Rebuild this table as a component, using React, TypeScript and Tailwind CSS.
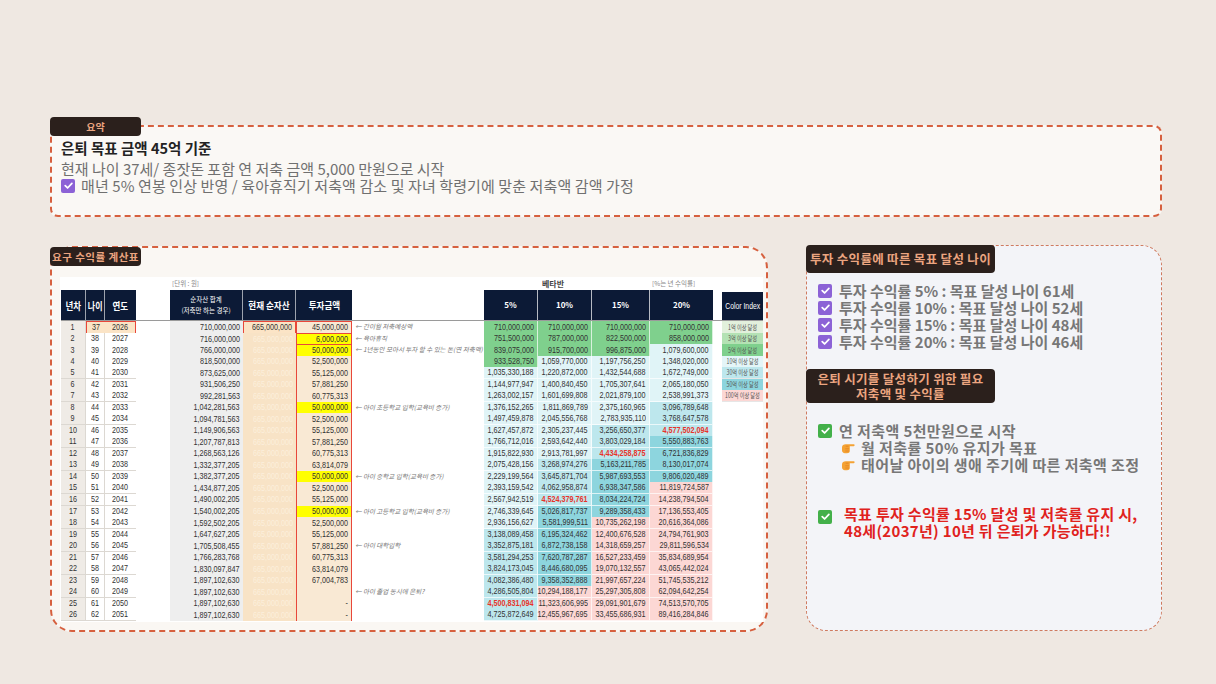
import React from "react";

const kr = "font-['Noto_Sans_CJK_KR','Noto_Sans',sans-serif]";
const sans = "font-['Liberation_Sans','Arial',sans-serif]";
const cols =
  "grid grid-cols-[25px_19px_31px_34px_73px_53px_56px_132px_54px_54px_58px_63px_9px_41px]";

// [순자산 합계, 투자금액, 5%, 10%, 15%, 20%]
const data: string[][] = [
  ["710,000,000", "45,000,000", "710,000,000", "710,000,000", "710,000,000", "710,000,000"],
  ["716,000,000", "6,000,000", "751,500,000", "787,000,000", "822,500,000", "858,000,000"],
  ["766,000,000", "50,000,000", "839,075,000", "915,700,000", "996,875,000", "1,079,600,000"],
  ["818,500,000", "52,500,000", "933,528,750", "1,059,770,000", "1,197,756,250", "1,348,020,000"],
  ["873,625,000", "55,125,000", "1,035,330,188", "1,220,872,000", "1,432,544,688", "1,672,749,000"],
  ["931,506,250", "57,881,250", "1,144,977,947", "1,400,840,450", "1,705,307,641", "2,065,180,050"],
  ["992,281,563", "60,775,313", "1,263,002,157", "1,601,699,808", "2,021,879,100", "2,538,991,373"],
  ["1,042,281,563", "50,000,000", "1,376,152,265", "1,811,869,789", "2,375,160,965", "3,096,789,648"],
  ["1,094,781,563", "52,500,000", "1,497,459,878", "2,045,556,768", "2,783,935,110", "3,768,647,578"],
  ["1,149,906,563", "55,125,000", "1,627,457,872", "2,305,237,445", "3,256,650,377", "4,577,502,094"],
  ["1,207,787,813", "57,881,250", "1,766,712,016", "2,593,642,440", "3,803,029,184", "5,550,883,763"],
  ["1,268,563,126", "60,775,313", "1,915,822,930", "2,913,781,997", "4,434,258,875", "6,721,836,829"],
  ["1,332,377,205", "63,814,079", "2,075,428,156", "3,268,974,276", "5,163,211,785", "8,130,017,074"],
  ["1,382,377,205", "50,000,000", "2,229,199,564", "3,645,871,704", "5,987,693,553", "9,806,020,489"],
  ["1,434,877,205", "52,500,000", "2,393,159,542", "4,062,958,874", "6,938,347,586", "11,819,724,587"],
  ["1,490,002,205", "55,125,000", "2,567,942,519", "4,524,379,761", "8,034,224,724", "14,238,794,504"],
  ["1,540,002,205", "50,000,000", "2,746,339,645", "5,026,817,737", "9,289,358,433", "17,136,553,405"],
  ["1,592,502,205", "52,500,000", "2,936,156,627", "5,581,999,511", "10,735,262,198", "20,616,364,086"],
  ["1,647,627,205", "55,125,000", "3,138,089,458", "6,195,324,462", "12,400,676,528", "24,794,761,903"],
  ["1,705,508,455", "57,881,250", "3,352,875,181", "6,872,738,158", "14,318,659,257", "29,811,596,534"],
  ["1,766,283,768", "60,775,313", "3,581,294,253", "7,620,787,287", "16,527,233,459", "35,834,689,954"],
  ["1,830,097,847", "63,814,079", "3,824,173,045", "8,446,680,095", "19,070,132,557", "43,065,442,024"],
  ["1,897,102,630", "67,004,783", "4,082,386,480", "9,358,352,888", "21,997,657,224", "51,745,535,212"],
  ["1,897,102,630", "", "4,286,505,804", "10,294,188,177", "25,297,305,808", "62,094,642,254"],
  ["1,897,102,630", "-", "4,500,831,094", "11,323,606,995", "29,091,901,679", "74,513,570,705"],
  ["1,897,102,630", "-", "4,725,872,649", "12,455,967,695", "33,455,686,931", "89,416,284,846"],
];

const notes: Record<number, string> = {
  1: "← 간이월 저축예상액",
  2: "← 육아휴직",
  3: "← 1년동안 모아서 투자 할 수 있는 돈(연 저축액)",
  8: "← 아이 초등학교 입학(교육비 증가)",
  14: "← 아이 중학교 입학(교육비 증가)",
  17: "← 아이 고등학교 입학(교육비 증가)",
  20: "← 아이 대학입학",
  24: "← 아이 졸업 동시에 은퇴?",
};

const yellowRows = [2, 3, 8, 14, 17];
const redCells = ["10-3", "12-2", "16-1", "25-0"];

const colorIndex: [string, string][] = [
  ["1억 이상 달성", "bg-[#e2f0dc]"],
  ["3억 이상 달성", "bg-[#b4e2b4]"],
  ["5억 이상 달성", "bg-[#7fd08d]"],
  ["10억 이상 달성", "bg-[#e4f5f8]"],
  ["30억 이상 달성", "bg-[#bde7ed]"],
  ["50억 이상 달성", "bg-[#8dd5de]"],
  ["100억 이상 달성", "bg-[#fcd7d4]"],
];

function band(s: string) {
  const v = Number(s.replace(/,/g, ""));
  if (v >= 10000000000) return "bg-[#fcd7d4]";
  if (v >= 5000000000) return "bg-[#8dd5de]";
  if (v >= 3000000000) return "bg-[#bde7ed]";
  if (v >= 1000000000) return "bg-[#e0f4f7]";
  if (v >= 500000000) return "bg-[#7fd08d]";
  if (v >= 300000000) return "bg-[#b4e2b4]";
  return "bg-[#e2f0dc]";
}

// narrow, Arial-Narrow-like numbers
const R = ({ children }: { children: React.ReactNode }) => (
  <span className="inline-block origin-right scale-x-[0.8] whitespace-nowrap">{children}</span>
);
const C = ({ children, s = "scale-x-[0.8]" }: { children: React.ReactNode; s?: string }) => (
  <span className={`inline-block origin-center whitespace-nowrap ${s}`}>{children}</span>
);

const PurpleCheck = () => (
  <span className="inline-flex h-[14px] w-[14px] shrink-0 items-center justify-center rounded-[2px] bg-[#8c62d6]">
    <svg viewBox="0 0 12 12" className="h-[11px] w-[11px]">
      <path d="M2.4 6.2 L5 8.7 L9.7 3.6" stroke="white" strokeWidth="1.9" fill="none" strokeLinecap="round" strokeLinejoin="round" />
    </svg>
  </span>
);

const GreenCheck = () => (
  <span className="inline-flex h-[14px] w-[14px] shrink-0 items-center justify-center rounded-[2px] bg-[#43b04a]">
    <svg viewBox="0 0 12 12" className="h-[11px] w-[11px]">
      <path d="M2.4 6.2 L5 8.7 L9.7 3.6" stroke="white" strokeWidth="1.9" fill="none" strokeLinecap="round" strokeLinejoin="round" />
    </svg>
  </span>
);

const Hand = () => (
  <svg viewBox="0 0 16 14" className="h-[13px] w-[15px] shrink-0">
    <path d="M1 7 C1 4.8 2.8 3.6 5 3.6 L13.6 3.6 C15 3.6 15 5.6 13.6 5.6 L9.4 5.6 L9.4 10.8 C9.4 12.4 8 13.2 6.4 13.2 L4.2 13.2 C2.2 13.2 1 11.8 1 10 Z" fill="#f4a234" />
    <path d="M5 5.6 L8 5.6 M4.6 8.4 L8.6 8.4 M4.6 10.8 L8.4 10.8" stroke="#e07f1f" strokeWidth="0.8" />
  </svg>
);

const Label = ({ children, className = "" }: { children: React.ReactNode; className?: string }) => (
  <div className={`rounded-[4px] bg-[#2b201c] text-center font-bold text-[#eba580] ${kr} ${className}`}>{children}</div>
);

function TableRow({ i, row }: { i: number; row: string[] }) {
  const n = i + 1;
  const yellow = yellowRows.includes(n);
  const ci = colorIndex[i];
  const num = "flex items-center justify-end pr-[3px]";
  const mid = "flex items-center justify-center";
  return (
    <div className={`${cols} h-[11.54px] text-[9px] leading-[11px] text-[#333] ${sans}`}>
      <div className={`${mid} border-b border-r border-[#dcd8d2] bg-[#efebe6]`}>
        <C>{n}</C>
      </div>
      <div
        className={`${mid} ${n === 1 ? "border-y-[1.5px] border-l-[1.5px] border-[#e8473a] bg-[#fbe4c6]" : "border-b border-r border-[#dcd8d2] bg-white"}`}
      >
        <C>{36 + n}</C>
      </div>
      <div
        className={`${mid} ${n === 1 ? "border-y-[1.5px] border-r-[1.5px] border-[#e8473a] bg-[#fbe4c6]" : "border-b border-[#dcd8d2] bg-white"}`}
      >
        <C>{2025 + n}</C>
      </div>
      <div className="bg-white" />
      <div className={`${num} bg-[#eeeeee]`}>
        <R>{row[0]}</R>
      </div>
      <div
        className={`${num} ${n === 1 ? "border-[1.5px] border-[#e8473a] bg-[#fbe4c6] text-[#333]" : "bg-[#f8e3c6] text-[#fcefdc]"}`}
      >
        <R>665,000,000</R>
      </div>
      <div
        className={`${num} ${n <= 3 ? "border-[1.5px]" : "border-x-[1.5px]"} border-[#e8473a] ${yellow ? "bg-[#ffff00]" : "bg-[#f9e9d4]"}`}
      >
        <R>{row[1]}</R>
      </div>
      <div className={`truncate bg-white pl-[3px] text-[6.5px] italic text-[#777] ${kr}`}>{notes[n] ?? ""}</div>
      {row.slice(2).map((v, k) => (
        <div
          key={k}
          className={`${num} border-b border-r border-white/70 ${band(v)} ${redCells.includes(`${n}-${k}`) ? "font-bold text-[#e8342a]" : ""}`}
        >
          <R>{v}</R>
        </div>
      ))}
      <div className="bg-white" />
      {ci ? (
        <div className={`${mid} border-b border-[#e6e6e6] text-[7px] text-[#555] ${kr} ${ci[1]}`}>
          <C s="scale-x-[0.74]">{ci[0]}</C>
        </div>
      ) : (
        <div className="bg-white" />
      )}
    </div>
  );
}

function CalcTable() {
  const head = `flex items-center justify-center bg-[#0c1a36] font-bold text-white ${kr}`;
  return (
    <div className="h-[345px] w-[703px] bg-white pl-[1px]">
      <div className={`${cols} h-[13px] items-center text-[6.5px] text-[#888] ${kr}`}>
        <div className="col-span-4" />
        <div className="pl-[2px]">[단위 : 원]</div>
        <div className="col-span-3" />
        <div className="col-span-2 pl-[58px] text-[8px] font-bold text-[#444]">베타반</div>
        <div />
        <div className="pl-[2px]">[%는 년 수익률]</div>
        <div className="col-span-2" />
      </div>
      <div className={`${cols} h-[31px] border-b border-[#9a9a9a]`}>
        <div className={`${head} border-r border-white/60 text-[10px]`}>
          <C s="scale-x-[0.85]">년차</C>
        </div>
        <div className={`${head} border-r border-white/60 text-[10px]`}>
          <C s="scale-x-[0.8]">나이</C>
        </div>
        <div className={`${head} text-[10px]`}>
          <C s="scale-x-[0.85]">연도</C>
        </div>
        <div />
        <div className={`${head} flex-col border-r border-white/60 text-[6.5px] font-normal leading-[11px] text-[#e8e8e8]`}>
          <span>순자산 합계</span>
          <span>(저축만 하는 경우)</span>
        </div>
        <div className={`${head} border-r border-white/60 text-[9.5px]`}>
          <C s="scale-x-[0.9]">현재 순자산</C>
        </div>
        <div className={`${head} text-[9.5px]`}>
          <C s="scale-x-[0.9]">투자금액</C>
        </div>
        <div />
        <div className={`${head} border-r border-white/70 text-[8px]`}>5%</div>
        <div className={`${head} border-r border-white/70 text-[8px]`}>10%</div>
        <div className={`${head} border-r border-white/70 text-[8px]`}>15%</div>
        <div className={`${head} text-[8px]`}>20%</div>
        <div />
        <div className={`mt-[2px] flex items-center justify-center bg-[#0c1a36] text-[8.5px] text-white ${sans}`}>
          <C s="scale-x-[0.8]">Color Index</C>
        </div>
      </div>
      {data.map((row, i) => (
        <TableRow key={i} i={i} row={row} />
      ))}
    </div>
  );
}

export default function App() {
  return (
    <div className={`min-h-screen bg-[#efe8e2] px-[50px] pt-[125px] ${kr}`}>
      {/* 요약 */}
      <section className="relative h-[92px] w-[1112px] rounded-[8px] border-2 border-dashed border-[#d6603f] bg-[#faf8f5] pl-[9px] pt-[12px]">
        <Label className="absolute -left-[2px] -top-[10px] h-[19px] w-[91px] text-[10px] leading-[19px]">요약</Label>
        <div className="text-[14.5px] font-bold leading-[18px] text-[#222]">은퇴 목표 금액 45억 기준</div>
        <div className="mt-[3px] text-[15px] leading-[17px] text-[#707070]">현재 나이 37세/ 종잣돈 포함 연 저축 금액 5,000 만원으로 시작</div>
        <div className="flex items-center gap-[6px] text-[15px] leading-[17px] tracking-[0.1px] text-[#707070]">
          <PurpleCheck />
          <span>매년 5% 연봉 인상 반영 / 육아휴직기 저축액 감소 및 자녀 학령기에 맞춘 저축액 감액 가정</span>
        </div>
      </section>

      <div className="mt-[28px] flex gap-[38px]">
        {/* 요구 수익률 계산표 */}
        <section className="relative mt-[1px] h-[386px] w-[718px] rounded-[22px] border-2 border-dashed border-[#d6603f] bg-[#faf7f3] pl-[8px] pt-[29px]">
          <Label className="absolute -left-[2px] -top-[1px] h-[19px] w-[91px] text-[10.5px] leading-[19px] tracking-[0.5px]">요구 수익률 계산표</Label>
          <CalcTable />
        </section>

        {/* 목표 달성 나이 */}
        <section className="h-[386px] w-[356px] rounded-[20px] border border-dashed border-[#cf7a5f] bg-[#f3f4f8]">
          <Label className="-ml-px -mt-px h-[28px] w-[189px] text-[12.5px] leading-[28px] tracking-[0.3px]">투자 수익률에 따른 목표 달성 나이</Label>
          <ul className="mt-[9px] pl-[11px] text-[15px] font-bold leading-[17px] text-[#777]">
            {[
              ["5%", "61"],
              ["10%", "52"],
              ["15%", "48"],
              ["20%", "46"],
            ].map(([r, a]) => (
              <li key={r} className="flex items-center gap-[7px]">
                <PurpleCheck />
                <span>
                  투자 수익률 {r} : 목표 달성 나이 {a}세
                </span>
              </li>
            ))}
          </ul>
          <Label className="-ml-px mt-[19px] w-[189px] py-[2px] text-[12.5px] leading-[15px] tracking-[0.3px]">
            은퇴 시기를 달성하기 위한 필요
            <br />
            저축액 및 수익률
          </Label>
          <div className="mt-[19px] pl-[11px] text-[15px] font-bold leading-[17px] tracking-[0.4px] text-[#777]">
            <div className="flex items-center gap-[7px]">
              <GreenCheck />
              <span>연 저축액 5천만원으로 시작</span>
            </div>
            <div className="flex items-center gap-[5px] pl-[23px]">
              <Hand />
              <span>월 저축률 50% 유지가 목표</span>
            </div>
            <div className="flex items-center gap-[5px] pl-[23px]">
              <Hand />
              <span>태어날 아이의 생애 주기에 따른 저축액 조정</span>
            </div>
          </div>
          <div className="mt-[32px] flex gap-[12px] pl-[11px] text-[15px] font-bold leading-[17px] tracking-[0.3px] text-[#e0221d]">
            <div className="pt-[2px]">
              <GreenCheck />
            </div>
            <div>
              목표 투자 수익률 15% 달성 및 저축률 유지 시,
              <br />
              48세(2037년) 10년 뒤 은퇴가 가능하다!!
            </div>
          </div>
        </section>
      </div>
    </div>
  );
}
